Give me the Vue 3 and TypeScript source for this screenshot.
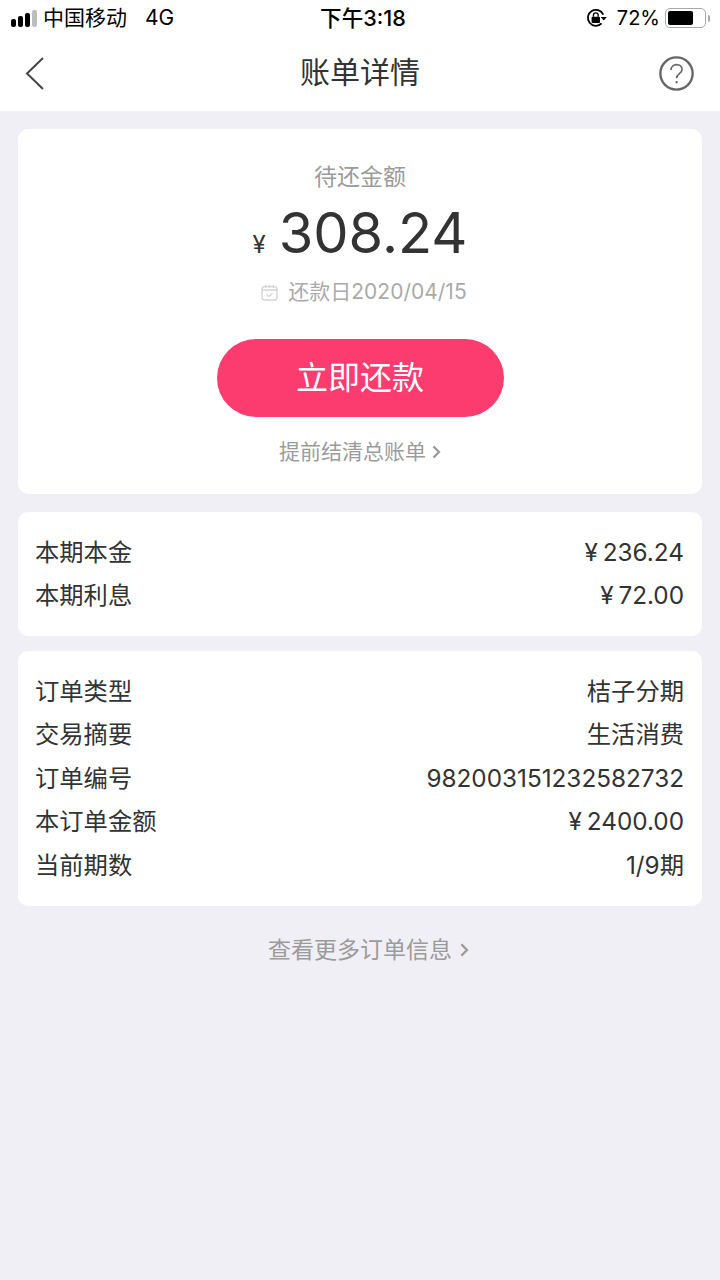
<script setup lang="ts">
interface Row {
  label: string;
  value: string;
}

const costRows: Row[] = [
  { label: '本期本金', value: '¥ 236.24' },
  { label: '本期利息', value: '¥ 72.00' },
];

const orderRows: Row[] = [
  { label: '订单类型', value: '桔子分期' },
  { label: '交易摘要', value: '生活消费' },
  { label: '订单编号', value: '982003151232582732' },
  { label: '本订单金额', value: '¥ 2400.00' },
  { label: '当前期数', value: '1/9期' },
];
</script>

<template>
  <div class="page">
    <div class="status-bar">
      <div class="status-left">
        <span class="signal">
          <i class="s1"></i><i class="s2"></i><i class="s3"></i><i class="s4"></i>
        </span>
        <span class="carrier">中国移动</span>
        <span class="network">4G</span>
      </div>
      <div class="status-time">下午3:18</div>
      <div class="status-right">
        <svg class="lock" width="21" height="20" viewBox="0 0 21 20">
          <path d="M15.6 15.4A8 8 0 1 1 17.2 6.6" fill="none" stroke="#000" stroke-width="1.8" />
          <path d="M14.8 9h6l-3 3.4z" fill="#000" />
          <rect x="5.6" y="8.8" width="8.4" height="6.2" rx="1" fill="#000" />
          <path d="M7.4 8.8V7.2a2.4 2.4 0 0 1 4.8 0v1.6" fill="none" stroke="#000" stroke-width="1.3" />
        </svg>
        <span class="percent">72%</span>
        <span class="battery"><span class="battery-fill"></span></span>
        <span class="battery-tip"></span>
      </div>
    </div>

    <header class="nav-bar">
      <svg class="back" width="20" height="36" viewBox="0 0 20 36">
        <path d="M18 2 2 17.5 18 33" fill="none" stroke="#444" stroke-width="2" />
      </svg>
      <h1 class="nav-title">账单详情</h1>
      <svg class="help" width="35" height="35" viewBox="0 0 36 36">
        <circle cx="18" cy="18" r="16.6" fill="none" stroke="#666" stroke-width="2.4" />
        <path d="M12.4 14.4c0-3.4 2.5-5.6 5.7-5.6s5.6 2.1 5.6 5c0 4.2-5.6 4.6-5.6 9" fill="none" stroke="#666" stroke-width="1.7" />
        <circle cx="18.1" cy="27" r="1.2" fill="#666" />
      </svg>
    </header>

    <main class="content">
      <section class="card summary">
        <div class="summary-label">待还金额</div>
        <div class="amount"><span class="currency">¥</span><span class="amount-num">308.24</span></div>
        <div class="due">
          <svg class="calendar" width="17" height="17" viewBox="0 0 17 17">
            <rect x="1" y="2.6" width="15" height="13.4" rx="2.4" fill="none" stroke="#d4d4d4" stroke-width="1.4" />
            <path d="M1 6h15M4.6 1v3M8.5 1v3M12.4 1v3" fill="none" stroke="#d4d4d4" stroke-width="1.4" />
            <path d="m5.6 10.4 2.2 2.2 3.8-3.6" fill="none" stroke="#d4d4d4" stroke-width="1.3" />
          </svg>
          <span>还款日2020/04/15</span>
        </div>
        <button class="pay-btn" type="button">立即还款</button>
        <div class="settle">
          <span>提前结清总账单</span>
          <svg class="chevron" width="9" height="14" viewBox="0 0 9 14">
            <path d="m1.4 1.4 5.6 5.6-5.6 5.6" fill="none" stroke="#9b9b9b" stroke-width="2.2" />
          </svg>
        </div>
      </section>

      <section class="card rows cost">
        <div v-for="row in costRows" :key="row.label" class="row">
          <span>{{ row.label }}</span>
          <span>{{ row.value }}</span>
        </div>
      </section>

      <section class="card rows order">
        <div v-for="row in orderRows" :key="row.label" class="row">
          <span>{{ row.label }}</span>
          <span>{{ row.value }}</span>
        </div>
      </section>

      <div class="more">
        <span>查看更多订单信息</span>
        <svg class="chevron" width="9" height="14" viewBox="0 0 9 14">
          <path d="m1.4 1.4 5.6 5.6-5.6 5.6" fill="none" stroke="#9b9b9b" stroke-width="2.2" />
        </svg>
      </div>
    </main>
  </div>
</template>

<style scoped>
.page {
  width: 720px;
  height: 1280px;
  overflow: hidden;
  background: #efeff5;
  color: #333;
  font-family: Inter, "Noto Sans CJK SC", sans-serif;
}

.status-bar {
  height: 36px;
  background: #fff;
  display: grid;
  grid-template-columns: 1fr auto 1fr;
  align-items: center;
  color: #000;
  font-size: 21px;
  line-height: 36px;
}

.status-left {
  display: flex;
  align-items: center;
  padding-left: 11px;
}

.signal {
  display: flex;
  align-items: flex-end;
  gap: 2px;
  height: 17px;
}

.signal i {
  display: block;
  width: 5px;
  border-radius: 2px;
  background: #000;
}

.s1 { height: 8px; }
.s2 { height: 11px; }
.s3 { height: 14px; }
.s4 { height: 17px; background: #bdbdbd !important; }

.carrier {
  margin-left: 6px;
}

.network {
  margin-left: 18px;
}

.status-time {
  padding-left: 6px;
  font-size: 21.6px;
  font-weight: 500;
}

.status-right {
  display: flex;
  align-items: center;
  justify-content: flex-end;
  padding-right: 10px;
}

.percent {
  margin-left: 10px;
  font-size: 20px;
}

.battery {
  margin-left: 5px;
  width: 41px;
  height: 20px;
  border: 1.5px solid #a8a8a8;
  border-radius: 5px;
  padding: 2px;
  box-sizing: border-box;
  display: block;
}

.battery-fill {
  display: block;
  width: 72%;
  height: 100%;
  background: #000;
  border-radius: 2px;
}

.battery-tip {
  margin-left: 2px;
  width: 2px;
  height: 7px;
  background: #a8a8a8;
  border-radius: 0 2px 2px 0;
}

.nav-bar {
  height: 75px;
  background: #fff;
  display: flex;
  align-items: center;
  justify-content: space-between;
  padding: 0 26px 0 25px;
  position: relative;
}

.nav-title {
  margin: 0;
  font-size: 30px;
  font-weight: 400;
  line-height: 72px;
  color: #333;
  position: absolute;
  top: 0;
  left: 0;
  right: 0;
  text-align: center;
  pointer-events: none;
}

.content {
  padding: 18px 18px 0;
}

.card {
  background: #fff;
  border-radius: 10px;
}

.summary {
  height: 365px;
  box-sizing: border-box;
  padding-top: 32px;
  display: flex;
  flex-direction: column;
  align-items: center;
}

.summary-label {
  font-size: 23px;
  line-height: 32px;
  color: #9b9b9b;
}

.amount {
  display: flex;
  align-items: baseline;
  margin-top: 7px;
  height: 66px;
  line-height: 66px;
}

.currency {
  font-size: 24px;
  margin-right: 13px;
}

.amount-num {
  font-size: 56px;
}

.due {
  display: flex;
  align-items: center;
  margin-top: 11px;
  padding-left: 8px;
  font-size: 21px;
  line-height: 30px;
  color: #aaa;
}

.calendar {
  margin-right: 10px;
}

.pay-btn {
  margin-top: 32px;
  width: 287px;
  height: 78px;
  border: none;
  border-radius: 39px;
  background: #fc3b6e;
  color: #fff;
  font-family: inherit;
  font-size: 32px;
  padding: 0 0 6px;
}

.settle,
.more {
  display: flex;
  align-items: center;
  color: #9b9b9b;
}

.settle {
  margin-top: 20px;
  font-size: 21px;
  line-height: 30px;
}

.settle .chevron {
  margin-left: 6px;
}

.rows {
  box-sizing: border-box;
  padding: 0 18px 0 17px;
}

.cost {
  margin-top: 18px;
  height: 124px;
  padding-top: 19px;
}

.order {
  margin-top: 15px;
  height: 255px;
  padding-top: 19px;
}

.row {
  display: flex;
  justify-content: space-between;
  height: 43.4px;
  line-height: 43.4px;
  font-size: 24.3px;
  word-spacing: -2px;
  color: #333;
}

.more {
  justify-content: center;
  margin-top: 28px;
  padding-left: 17px;
  font-size: 23px;
  line-height: 32px;
}

.more .chevron {
  margin-left: 8px;
}
</style>
